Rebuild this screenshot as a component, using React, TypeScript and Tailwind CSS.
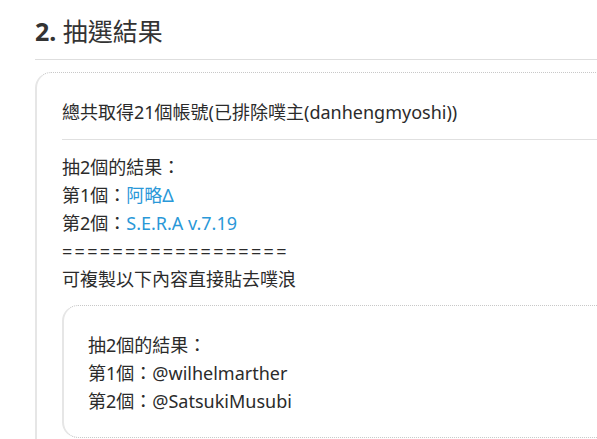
import React from "react";

const font = { fontFamily: '"Noto Sans", "Noto Sans CJK TC", sans-serif' };

export default function App() {
  return (
    <div className="w-[597px] h-[439px] overflow-hidden bg-white text-[#2b2b2b]" style={font}>
      <div className="pl-[35px] w-[760px]">
        <h2 className="pt-[14px] h-[59px] text-[25px] leading-[34px] font-normal text-[#333]">
          <span className="font-bold">2.</span> 抽選結果
        </h2>
        <div className="h-px bg-[#dedede]" />
        <div className="mt-[12px] rounded-tl-[16px] rounded-bl-[16px] border border-dotted border-[#c8c8c8] border-l-2 border-l-[#e6e6e6] [border-left-style:solid] pl-[25px] pt-[25px] text-[18px] leading-[28px]">
          <div>總共取得21個帳號(已排除噗主(danhengmyoshi))</div>
          <div className="mt-[13px] h-px bg-[#e0e0e0]" />
          <div className="mt-[13px]">
            <div>抽2個的結果：</div>
            <div>
              第1個：<span className="text-[#2a98d8]">阿略Δ</span>
            </div>
            <div>
              第2個：<span className="text-[#2a98d8]">S.E.R.A v.7.19</span>
            </div>
            <div className="tracking-[2.3px]">==================</div>
            <div>可複製以下內容直接貼去噗浪</div>
          </div>
          <div className="mt-[12px] rounded-[16px] border border-dotted border-[#c8c8c8] border-l-2 border-l-[#e6e6e6] [border-left-style:solid] pl-[24px] pt-[25px] pb-[22px]">
            <div>抽2個的結果：</div>
            <div>第1個：@wilhelmarther</div>
            <div>第2個：@SatsukiMusubi</div>
          </div>
          <div className="h-[20px]" />
        </div>
      </div>
    </div>
  );
}
